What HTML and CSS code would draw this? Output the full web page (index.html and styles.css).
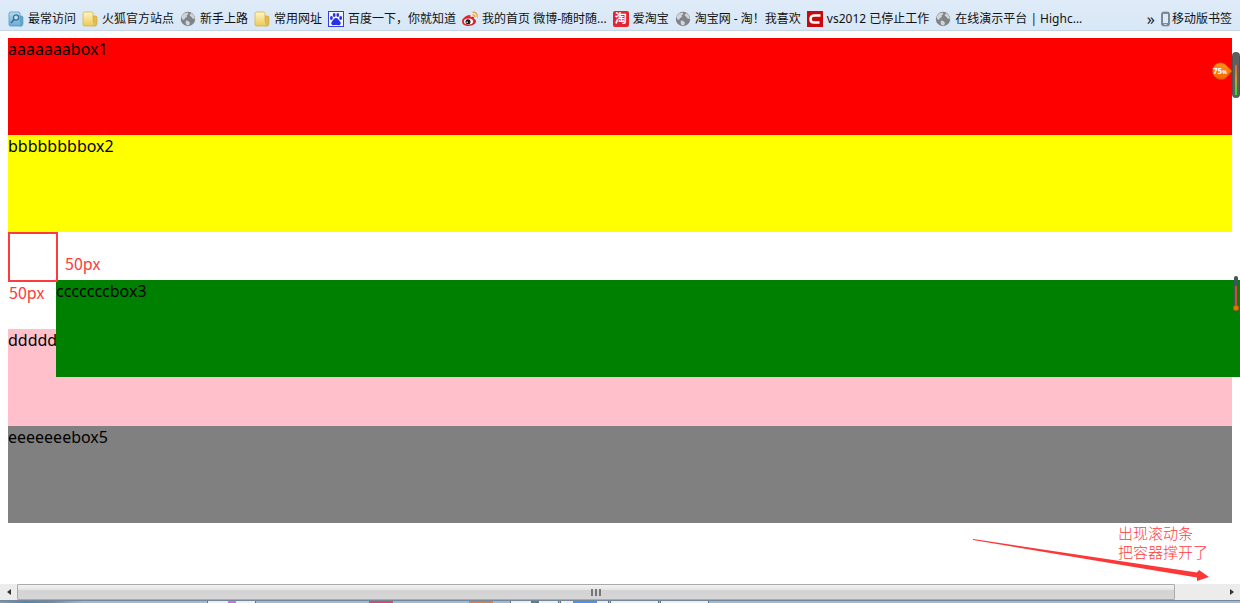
FILE: index.html
```
<!DOCTYPE html>
<html lang="zh-CN">
<head>
    <meta charset="UTF-8">
    <meta name="viewport" content="width=device-width, initial-scale=1.0">
    <title>position relative</title>
    <link rel="stylesheet" href="styles.css">
</head>
<body>
    <svg class="defs" width="0" height="0" aria-hidden="true">
        <defs>
            <linearGradient id="paper" x1="0" y1="0" x2="0" y2="1">
                <stop offset="0" stop-color="#fff6c2"/>
                <stop offset="1" stop-color="#ebca55"/>
            </linearGradient>
            <linearGradient id="blue" x1="0" y1="0" x2="0" y2="1">
                <stop offset="0" stop-color="#b5dcf1"/>
                <stop offset="1" stop-color="#68acd2"/>
            </linearGradient>
            <linearGradient id="heat" x1="0" y1="0" x2="0" y2="1">
                <stop offset="0" stop-color="#e8632c"/>
                <stop offset="0.5" stop-color="#c6a02c"/>
                <stop offset="1" stop-color="#27e030"/>
            </linearGradient>
            <linearGradient id="orange" x1="0" y1="0" x2="0" y2="1">
                <stop offset="0" stop-color="#ff9418"/>
                <stop offset="1" stop-color="#f56400"/>
            </linearGradient>
            <symbol id="folder" viewBox="0 0 16 16">
                <path d="M11 5h3l1 1v7l-1 2h-3z" fill="#e2bd4b" stroke="#c9a33e" stroke-width=".6"/>
                <path d="M1 2l1-1h8l1 1v9l1 1v3H2l-1-1z" fill="url(#paper)" stroke="#d5b452" stroke-width=".8"/>
            </symbol>
            <symbol id="globe" viewBox="0 0 16 16">
                <circle cx="8" cy="8" r="7.200" fill="#7f8489"/>
                <path d="M1.500 5.500L4 2.500l3.500-1 1 1.500-2 1.500.5 1.500-2 1-1 2-2-1zM11 2l2.500 2L15 8l-2.500-.5-1.500-2-1.500-1zM6 9.500l2.500.5 1.500 2-1 2.500-2.500-.5-1-2.500z" fill="#cfd5da"/>
            </symbol>
        </defs>
    </svg>

    <nav class="bookmarks">
        <a href="#">
            <svg class="icon" viewBox="0 0 16 16">
                <path d="M11 5h3l1 1v7l-1 2h-3z" fill="#68a5c8" stroke="#5593b7" stroke-width=".6"/>
                <path d="M1 2l1-1h9l1 1v9l1 1v3H2l-1-1z" fill="url(#blue)" stroke="#5c9dc3" stroke-width=".8"/>
                <circle cx="8" cy="6.500" r="2.600" fill="#b9dff0" stroke="#356f9a" stroke-width="1.300"/>
                <path d="M6 8.500L3 12" stroke="#356f9a" stroke-width="1.600"/>
            </svg>
            最常访问
        </a>
        <a href="#"><svg class="icon"><use href="#folder"/></svg>火狐官方站点</a>
        <a href="#"><svg class="icon"><use href="#globe"/></svg>新手上路</a>
        <a href="#"><svg class="icon"><use href="#folder"/></svg>常用网址</a>
        <a href="#">
            <svg class="icon" viewBox="0 0 16 16">
                <rect x=".5" y=".5" width="15" height="15" fill="#f3f6ff" stroke="#3440dc"/>
                <g fill="#2932e1">
                    <ellipse cx="3.400" cy="7" rx="1.400" ry="1.900"/>
                    <ellipse cx="6.200" cy="4" rx="1.400" ry="2"/>
                    <ellipse cx="9.800" cy="4" rx="1.400" ry="2"/>
                    <ellipse cx="12.700" cy="7" rx="1.400" ry="1.900"/>
                    <path d="M8 7c2 0 2.500 2 4 3.500 1.500 1.700.5 4-1.500 3.700-2-.4-3-.4-5 0C3.500 14.500 2.600 12 4 10.500 5.500 9 6 7 8 7z"/>
                </g>
            </svg>
            百度一下，你就知道
        </a>
        <a href="#">
            <svg class="icon" viewBox="0 0 16 16">
                <path d="M7 4C3 5 0 8 0 10.500 0 13.500 3 15 6.500 15c4 0 7.500-2 7.500-4.700 0-1.500-1-2-2-2.300.5-2-.5-2.700-3.500-1.700C8.700 4.500 8.500 3.600 7 4z" fill="#e1242d"/>
                <ellipse cx="6.500" cy="10.500" rx="4.600" ry="3" fill="#fff"/>
                <circle cx="6" cy="10.700" r="2.500" fill="#191919"/>
                <circle cx="5.200" cy="11.200" r=".8" fill="#fff"/>
                <path d="M10.500 1.500c3-1 5.500 2 4.500 5M10.500 4c1.500-.4 2.600.8 2.200 2.200" fill="none" stroke="#f4a229" stroke-width="1.300"/>
            </svg>
            我的首页 微博-随时随...
        </a>
        <a href="#"><span class="icon taobao">淘</span>爱淘宝</a>
        <a href="#"><svg class="icon"><use href="#globe"/></svg>淘宝网 - 淘！我喜欢</a>
        <a href="#">
            <svg class="icon" viewBox="0 0 16 16">
                <rect width="16" height="16" fill="#c80a0c"/>
                <path d="M13.500 4.500H7.500C4.500 4.500 3.500 6 3.500 8.200c0 2 1.300 3.300 3.500 3.300h5.500" fill="none" stroke="#fff" stroke-width="2.500"/>
            </svg>
            vs2012 已停止工作
        </a>
        <a href="#"><svg class="icon"><use href="#globe"/></svg>在线演示平台 | Highc...</a>
        <button class="more" type="button">»</button>
        <a class="mobile" href="#">
            <svg class="phone" viewBox="0 0 9 16">
                <rect x=".7" y="1.200" width="7.600" height="13.600" rx="1.500" fill="#7e8b99" stroke="#6f7c89"/>
                <rect x="2" y="3" width="5" height="9" fill="#dceaf7"/>
                <rect x="3.500" y="13" width="2" height="1" fill="#dceaf7"/>
            </svg>移动版书签
        </a>
    </nav>

    <main>
        <div class="box box1">aaaaaaabox1</div>
        <div class="box box2">bbbbbbbbox2</div>
        <div class="box box3">cccccccbox3</div>
        <div class="box box4">dddddddbox4</div>
        <div class="box box5">eeeeeeebox5</div>

        <div class="mark square"></div>
        <span class="mark size size-right">50px</span>
        <span class="mark size size-below">50px</span>
        <p class="mark note">出现滚动条<br>把容器撑开了</p>
        <svg class="mark arrow" viewBox="0 0 238 44">
            <path d="M1 0L225 33.500l2-2.500 10 7-12 4v-3.500L120 21 1 1z" fill="#fc3737"/>
        </svg>

        <svg class="mark meter" viewBox="0 0 28 48">
            <rect x="20.500" y="1.500" width="7" height="45" rx="3" fill="#606060" stroke="#505050"/>
            <rect x="23" y="14" width="2" height="30" fill="url(#heat)"/>
            <path d="M20 20l-6-6C9 9 .5 13 .5 20S9 31 14 27z" fill="url(#orange)" stroke="#c24c00" stroke-width=".7"/>
            <text x="1" y="23" class="percent">75<tspan class="sign">%</tspan></text>
        </svg>
        <svg class="mark thermometer" viewBox="0 0 8 36">
            <rect x="2" y="0" width="4" height="32" rx="2" fill="#42555e"/>
            <path d="M4 10v20" stroke="#ca5029" stroke-width="2"/>
            <circle cx="4" cy="32" r="2.800" fill="#d87800" stroke="#aa4b20" stroke-width=".6"/>
        </svg>
    </main>

    <div class="scrollbar">
        <button type="button" aria-label="left"><svg viewBox="0 0 4 6"><path d="M4 0v6L0 3z"/></svg></button>
        <div class="track">
            <div class="thumb"><i></i><i></i><i></i></div>
        </div>
        <button type="button" aria-label="right"><svg viewBox="0 0 4 6"><path d="M0 0v6l4-3z"/></svg></button>
    </div>

    <footer class="taskbar">
        <div class="start"></div>
        <div class="task"><b class="purple"></b></div>
        <div class="pinned"><b class="pink"></b><b class="brown"></b></div>
        <div class="task"><b class="slate"></b></div>
        <div class="task"><b class="blue"></b></div>
        <div class="task"></div>
        <div class="task"></div>
    </footer>
</body>
</html>
```
FILE: styles.css
```
* {
    box-sizing: border-box;
}
body {
    display: flex;
    flex-direction: column;
    min-height: 100vh;
    margin: 0;
    overflow: hidden;
    background-color: #fff;
    color: #000;
    font-family: "Noto Sans", "Noto Sans CJK SC", sans-serif;
}
.defs {
    position: absolute;
}

/* bookmarks bar */
.bookmarks {
    display: flex;
    align-items: center;
    gap: 6px;
    height: 31px;
    padding: 7px 8px 0;
    border-bottom: 1px solid #c4d5e6;
    background: linear-gradient(#dfebf8, #d8e7f6);
    font-size: 12px;
    line-height: 18px;
    white-space: nowrap;
}
.bookmarks a {
    display: flex;
    align-items: center;
    gap: 4px;
    color: #111;
    text-decoration: none;
}
.icon {
    width: 16px;
    height: 16px;
    flex: none;
}
.taobao {
    border-radius: 2px;
    background-color: #e22631;
    color: #fff;
    font-weight: bold;
    line-height: 15px;
    text-align: center;
}
.more {
    margin-left: auto;
    padding: 0;
    border: 0;
    background: none;
    color: #222;
    font: 16px "Noto Sans", sans-serif;
    line-height: 16px;
}
.bookmarks .mobile {
    gap: 2px;
}
.phone {
    width: 9px;
    height: 16px;
}

/* boxes */
main {
    position: relative;
    flex: 1;
    padding: 7px 8px 0;
    overflow: hidden;
}
.box {
    height: 97px;
    font-size: 16px;
    line-height: 22px;
}
.box1 {
    background-color: red;
}
.box2 {
    background-color: yellow;
}
.box3 {
    position: relative;
    top: 48px;
    left: 48px;
    background-color: green;
}
.box4 {
    background-color: pink;
}
.box5 {
    background-color: gray;
}

/* red notes over the boxes */
.mark {
    position: absolute;
    margin: 0;
    color: #fc3c3c;
    font-size: 15px;
    line-height: 19px;
}
.square {
    top: 201px;
    left: 8px;
    width: 50px;
    height: 50px;
    border: 2px solid #fc3c3c;
}
.size {
    font-family: "Noto Sans CJK SC", sans-serif;
    font-size: 16px;
}
.size-right {
    top: 223px;
    left: 65px;
}
.size-below {
    top: 252px;
    left: 9px;
}
.note {
    top: 493px;
    right: 32px;
    font-weight: 300;
}
.arrow {
    top: 508px;
    right: 30px;
    width: 238px;
    height: 44px;
}
.meter {
    top: 20px;
    right: 0;
    width: 28px;
    height: 48px;
}
.percent {
    fill: #fff;
    font-size: 8px;
    font-weight: bold;
}
.sign {
    font-size: 5px;
}
.thermometer {
    top: 245px;
    right: 0;
    width: 8px;
    height: 36px;
}

/* scrollbar */
.scrollbar {
    display: flex;
    height: 16px;
    background-color: #ececec;
}
.scrollbar button {
    display: flex;
    align-items: center;
    justify-content: center;
    width: 17px;
    padding: 0;
    border: 0;
    background: none;
}
.scrollbar svg {
    width: 4px;
    height: 6px;
    fill: #333;
}
.track {
    flex: 1;
}
.thumb {
    display: flex;
    align-items: center;
    justify-content: center;
    gap: 2px;
    width: 96%;
    height: 16px;
    border: 1px solid #aaa;
    border-radius: 1px;
    background: linear-gradient(#f2f2f2, #e4e4e4 35%, #d2d2d4 40%, #d6d6d6);
}
.thumb i {
    width: 2px;
    height: 7px;
    background-color: #777;
}

/* top edge of the taskbar */
.taskbar {
    display: flex;
    gap: 1px;
    height: 3px;
    background-color: #9dbbd9;
    border-top: 1px solid #76879a;
}
.start {
    width: 206px;
    background: linear-gradient(90deg, #8296b0, #4e89ad 12%, #7189a8 25%, #9dbbd9 40%);
}
.task {
    width: 49px;
    border: solid #627587;
    border-width: 0 1px;
    background-color: #e8f0f7;
}
.pinned {
    display: flex;
    justify-content: flex-end;
    gap: 76px;
    width: 252px;
    padding-right: 16px;
}
.taskbar b {
    display: block;
    width: 24px;
    height: 2px;
}
.task b {
    margin: 0 auto;
}
.taskbar .purple {
    width: 8px;
    background-color: #d66be8;
}
.taskbar .pink {
    background-color: #d64874;
}
.taskbar .brown {
    background-color: #cf8050;
}
.taskbar .slate {
    width: 8px;
    background-color: #607c8c;
}
.taskbar .blue {
    background-color: #4e93f0;
}
```
